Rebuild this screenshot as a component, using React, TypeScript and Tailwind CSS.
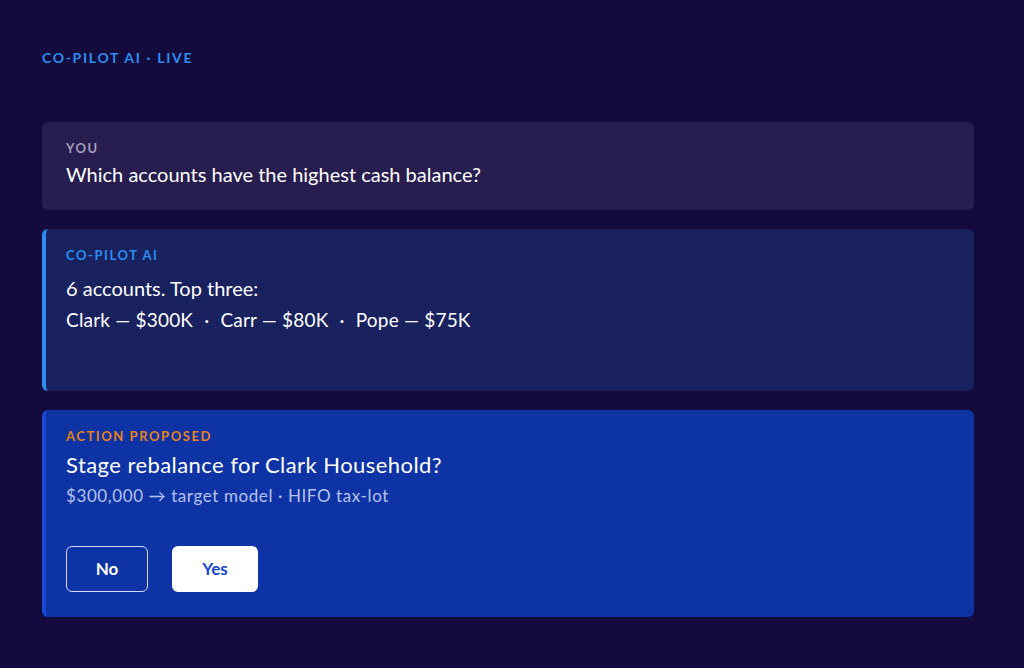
import React from 'react';

const font = { fontFamily: 'Lato, "Noto Sans", sans-serif' };

const Label: React.FC<{ children: React.ReactNode; className: string }> = ({ children, className }) => (
  <div className={`text-[13px] font-bold uppercase tracking-[0.12em] leading-4 ${className}`}>{children}</div>
);

const App: React.FC = () => {
  return (
    <div style={font} className="min-h-screen w-full bg-[#130b3d] pt-[50px] pl-[42px] pr-[50px] pb-[50px]">
      <Label className="text-[#2b8ef0] text-[14px]">Co-Pilot AI · Live</Label>

      <div className="mt-[56px] flex flex-col gap-[19px]">
        {/* user question */}
        <div className="h-[88px] rounded-md bg-[#271d4e] px-6 pt-[18px]">
          <Label className="text-[#a59fbd]">You</Label>
          <p className="mt-[6px] text-[20px] leading-6 text-white">Which accounts have the highest cash balance?</p>
        </div>

        {/* assistant reply */}
        <div className="h-[162px] rounded-md border-l-4 border-[#2b8ef0] bg-[#19215e] pl-5 pr-6 pt-[18px]">
          <Label className="text-[#2b8ef0]">Co-Pilot AI</Label>
          <p className="mt-[13px] text-[20px] leading-6 text-white">6 accounts. Top three:</p>
          <p className="mt-2 text-[19px] tracking-[0.01em] leading-6 text-white">
            Clark — $300K <span className="mx-1.5">·</span> Carr — $80K <span className="mx-1.5">·</span> Pope — $75K
          </p>
        </div>

        {/* proposed action */}
        <div className="h-[207px] rounded-md border-l-4 border-[#1848d6] bg-[#0d33a5] pl-5 pr-6 pt-[18px]">
          <Label className="text-[#e8811c]">Action Proposed</Label>
          <p className="mt-[7px] text-[22px] tracking-[0.02em] leading-7 text-white">Stage rebalance for Clark Household?</p>
          <p className="mt-[7px] text-[17px] tracking-[0.035em] leading-5 text-[#b7c3ee]">$300,000 → target model · HIFO tax-lot</p>
          <div className="mt-[40px] flex gap-6">
            <button className="h-[46px] w-[82px] rounded-md border-[1.5px] border-[#d6dcf5] text-[17px] font-bold text-white">
              No
            </button>
            <button className="h-[46px] w-[86px] rounded-md bg-white text-[17px] font-bold text-[#1a45d0]">
              Yes
            </button>
          </div>
        </div>
      </div>
    </div>
  );
};

export default App;
